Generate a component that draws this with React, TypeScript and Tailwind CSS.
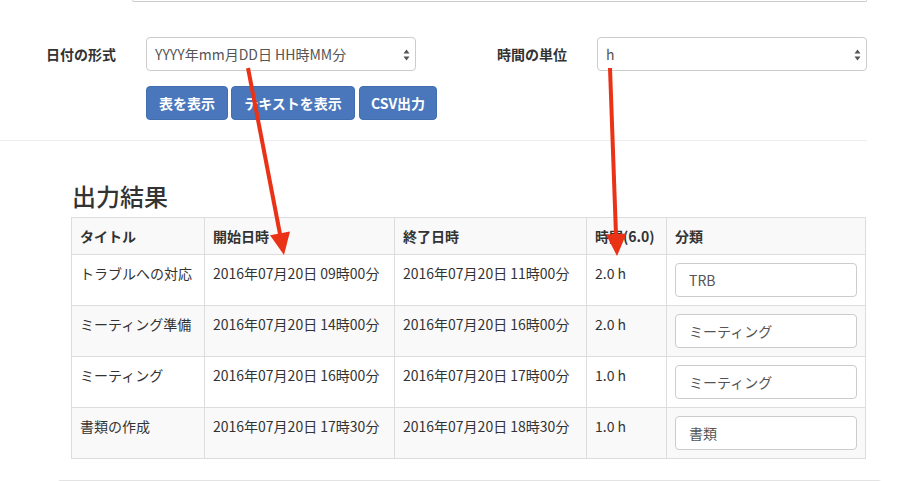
import React from 'react'

const rows = [
    { title: 'トラブルへの対応', start: '2016年07月20日 09時00分', end: '2016年07月20日 11時00分', time: '2.0 h', cat: 'TRB' },
    { title: 'ミーティング準備', start: '2016年07月20日 14時00分', end: '2016年07月20日 16時00分', time: '2.0 h', cat: 'ミーティング' },
    { title: 'ミーティング', start: '2016年07月20日 16時00分', end: '2016年07月20日 17時00分', time: '1.0 h', cat: 'ミーティング' },
    { title: '書類の作成', start: '2016年07月20日 17時30分', end: '2016年07月20日 18時30分', time: '1.0 h', cat: '書類' },
]

const SelectBox = ({ value, className }: any) => {
    return (
        <div className={`relative h-[34px] border border-[#ccc] rounded-[4px] bg-white flex items-center pl-[8px] text-[14px] text-[#555] ${className}`}>
            {value}
            {/* up/down carets */}
            <svg className="absolute right-[5px] top-[11px]" width="7" height="12" viewBox="0 0 7 12">
                <path d="M3.5 0.5 L6.5 4.5 L0.5 4.5 Z" fill="#555" />
                <path d="M3.5 11.5 L6.5 7.5 L0.5 7.5 Z" fill="#555" />
            </svg>
        </div>
    )
}

const Button = ({ children, className }: any) => (
    <div className={`h-[34px] rounded-[4px] bg-[#4a77bb] border border-[#426ead] text-white font-bold text-[14px] flex items-center justify-center ${className}`}>
        {children}
    </div>
)

export default function App() {
    return (
        <div className="relative w-[919px] h-[481px] overflow-hidden bg-white text-[#333] font-['Noto_Sans_CJK_JP',sans-serif]">
            {/* bottom of an input above */}
            <div className="ml-[132px] w-[735px] h-[2px] border-x border-b border-[#ccc] rounded-b-[4px]"></div>

            {/* form */}
            <div className="flex items-center mt-[35px]">
                <div className="w-[131px] pr-[15px] text-right text-[14px] font-bold">日付の形式</div>
                <SelectBox value="YYYY年mm月DD日 HH時MM分" className="ml-[15px] w-[270px]" />
                <div className="w-[166px] pr-[15px] text-right text-[14px] font-bold">時間の単位</div>
                <SelectBox value="h" className="ml-[15px] w-[270px]" />
            </div>
            <div className="flex mt-[15px] ml-[146px]">
                <Button className="w-[82px]">表を表示</Button>
                <Button className="w-[124px] ml-[3px]">テキストを表示</Button>
                <Button className="w-[78px] ml-[4px]">CSV出力</Button>
            </div>

            <div className="mt-[20px] w-[867px] border-t border-[#eee]"></div>

            {/* result */}
            <div className="ml-[71px] mt-[41px]">
                <h3 className="h-[27px] leading-[27px] text-[24px] font-medium text-[#333] ml-[1px]">出力結果</h3>
                <table className="mt-[8px] border-collapse text-[14px] text-[#333]">
                    <thead>
                        <tr className="bg-[#f9f9f9] h-[37px]">
                            <th className="w-[133px] border border-[#ddd] px-[8px] text-left font-bold">タイトル</th>
                            <th className="w-[190px] border border-[#ddd] px-[8px] text-left font-bold">開始日時</th>
                            <th className="w-[192px] border border-[#ddd] px-[8px] text-left font-bold">終了日時</th>
                            <th className="w-[80px] border border-[#ddd] px-[8px] text-left font-bold">時間(6.0)</th>
                            <th className="w-[199px] border border-[#ddd] px-[8px] text-left font-bold">分類</th>
                        </tr>
                    </thead>
                    <tbody>
                        {rows.map((r, i) => (
                            <tr key={i} className={i % 2 === 1 ? 'bg-[#f9f9f9]' : 'bg-white'}>
                                <td className="h-[51px] border border-[#ddd] px-[8px] pt-[8px] align-top leading-[20px]">{r.title}</td>
                                <td className="border border-[#ddd] px-[8px] pt-[8px] align-top leading-[20px]">{r.start}</td>
                                <td className="border border-[#ddd] px-[8px] pt-[8px] align-top leading-[20px]">{r.end}</td>
                                <td className="border border-[#ddd] px-[8px] pt-[8px] align-top leading-[20px]">{r.time}</td>
                                <td className="border border-[#ddd] px-[8px] py-[8px] align-top">
                                    <div className="h-[34px] border border-[#ccc] rounded-[4px] bg-white flex items-center pl-[13px] text-[#555]">
                                        {r.cat}
                                    </div>
                                </td>
                            </tr>
                        ))}
                    </tbody>
                </table>
            </div>

            {/* next panel */}
            <div className="ml-[57px] mt-[21px] w-[825px] h-[10px] border-x border-t border-[#e3e3e3] rounded-t-[4px]"></div>

            {/* annotation arrows */}
            <svg className="absolute inset-0 pointer-events-none" width="919" height="481">
                <line x1="248" y1="68" x2="280" y2="234" stroke="#ea3217" strokeWidth="4" />
                <polygon points="290,231.5 270,235.3 284,255" fill="#ea3217" />
                <line x1="610" y1="68" x2="616" y2="235" stroke="#ea3217" strokeWidth="4" />
                <polygon points="626.5,233.6 606,234.4 617,256" fill="#ea3217" />
            </svg>
        </div>
    )
}
